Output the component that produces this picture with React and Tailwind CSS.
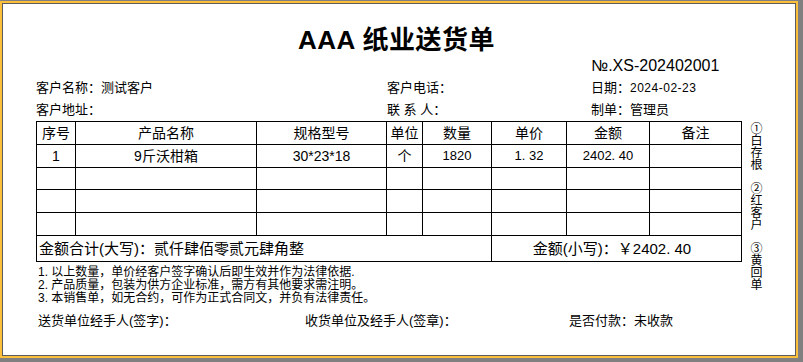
import React from "react";

const F = "font-['Liberation_Sans','Noto_Sans_CJK_SC',sans-serif]";

const rows = [
  { no: "1", name: "9斤沃柑箱", spec: "30*23*18", unit: "个", qty: "1820", price: "1. 32", amt: "2402. 40", note: "" },
  null,
  null,
  null,
];

function SideGroup({ text }) {
  return (
    <div className="[writing-mode:vertical-rl] [text-orientation:upright] text-[12px] leading-[13px] h-[48px] w-[13px] shrink-0">
      {text}
    </div>
  );
}

export default function App() {
  const td = "border border-black text-center p-0";
  return (
    <div className={`w-[803px] h-[362px] bg-[#808080] pt-[1px] ${F} text-black`}>
      <div className="w-[798px] h-[357px] border-2 border-[#fbbf3c]">
        <div className="w-full h-full border border-[#5c5c5c] bg-white flex flex-col pl-[33px] pt-[21px]">
          <div className="h-[30px] leading-[30px] text-[26px] font-bold text-center pr-[38px] tracking-[0.5px]">
            AAA 纸业送货单
          </div>
          <div className="grid grid-cols-[351px_204px_1fr] text-[13px]">
            <div className="h-[22px]" />
            <div />
            <div className="h-[22px] leading-[21px] text-[16px]">№.XS-202402001</div>
            <div className="h-[22px] leading-[22px]">客户名称：测试客户</div>
            <div className="leading-[22px]">客户电话：</div>
            <div className="leading-[22px]">
              日期：<span className="text-[12px] tracking-[0.5px]">2024-02-23</span>
            </div>
            <div className="h-[22px] leading-[22px]">客户地址：</div>
            <div className="leading-[22px]">联 系 人：</div>
            <div className="leading-[22px]">制单：管理员</div>
          </div>
          <div className="flex items-start h-[141px] shrink-0">
            <table className="table-fixed border-collapse w-[705px] text-[14px] leading-[18px]">
              <colgroup>
                <col className="w-[39px]" />
                <col className="w-[181px]" />
                <col className="w-[130px]" />
                <col className="w-[36px]" />
                <col className="w-[69px]" />
                <col className="w-[75px]" />
                <col className="w-[83px]" />
                <col className="w-[92px]" />
              </colgroup>
              <tbody>
                <tr className="h-[23px]">
                  {["序号", "产品名称", "规格型号", "单位", "数量", "单价", "金额", "备注"].map((h) => (
                    <td key={h} className={td}>{h}</td>
                  ))}
                </tr>
                {rows.map((r, i) => (
                  <tr key={i} className={i === 1 ? "h-[22px]" : "h-[23px]"}>
                    <td className={td}>{r ? r.no : ""}</td>
                    <td className={td}>{r ? r.name : ""}</td>
                    <td className={td}>{r ? r.spec : ""}</td>
                    <td className={td}>{r ? r.unit : ""}</td>
                    <td className={`${td} text-[13px]`}>{r ? r.qty : ""}</td>
                    <td className={`${td} text-[13px]`}>{r ? r.price : ""}</td>
                    <td className={`${td} text-[13px]`}>{r ? r.amt : ""}</td>
                    <td className={td}>{r ? r.note : ""}</td>
                  </tr>
                ))}
                <tr className="h-[26px]">
                  <td colSpan={5} className="border border-black p-0 pl-[2px] text-left text-[15px]">
                    金额合计(大写)：贰仟肆佰零贰元肆角整
                  </td>
                  <td colSpan={3} className="border border-black p-0 text-center text-[15px] pr-[9px]">
                    金额(小写)：￥2402. 40
                  </td>
                </tr>
              </tbody>
            </table>
            <div className="ml-[6px] pt-[1px] flex flex-col gap-[12px] self-start">
              <SideGroup text="①白存根" />
              <SideGroup text="②红客户" />
              <SideGroup text="③黄回单" />
            </div>
          </div>
          <div className="pt-[4px] text-[12px] leading-[13px] pl-[2px]">
            <div>1. 以上数量，单价经客户签字确认后即生效并作为法律依据.</div>
            <div>2. 产品质量，包装为供方企业标准，需方有其他要求需注明。</div>
            <div>3. 本销售单，如无合约，可作为正式合同文，并负有法律责任。</div>
          </div>
          <div className="mt-[6px] grid grid-cols-[267px_264px_1fr] text-[13px] leading-[20px] pl-[2px]">
            <div>送货单位经手人(签字)：</div>
            <div>收货单位及经手人(签章)：</div>
            <div>是否付款：未收款</div>
          </div>
        </div>
      </div>
    </div>
  );
}
